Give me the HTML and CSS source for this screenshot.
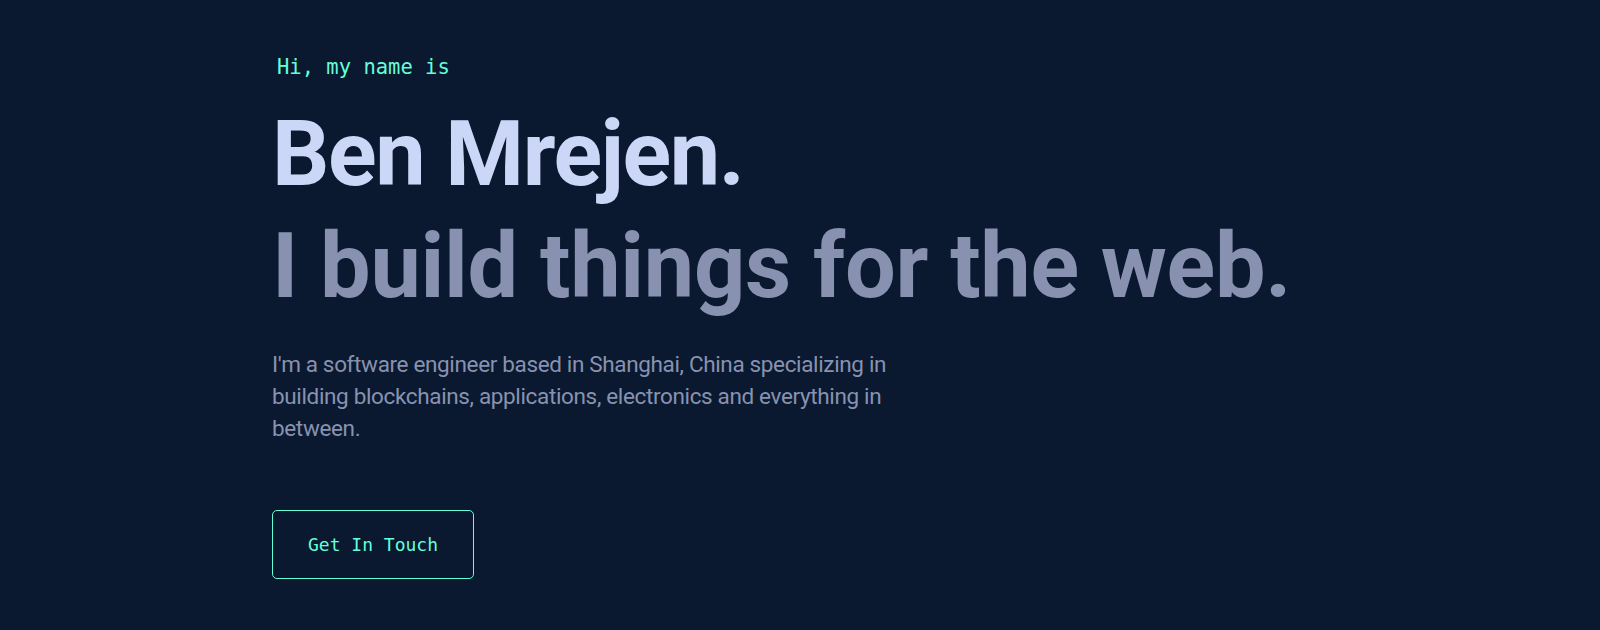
FILE: index.html
```html
<!DOCTYPE html>
<html lang="en">
<head>
<meta charset="utf-8">
<title>Ben Mrejen</title>
<link rel="stylesheet" href="styles.css">
</head>
<body>
<main class="hero">
  <h1 class="hero-intro">Hi, my name is</h1>
  <h2 class="big-heading name">Ben Mrejen.</h2>
  <h3 class="big-heading tagline">I build things for the web.</h3>
  <p class="hero-text">I'm a software engineer based in Shanghai, China specializing in building blockchains, applications, electronics and everything in between.</p>
  <a class="email-link" href="#contact">Get In Touch</a>
</main>
</body>
</html>
```

FILE: styles.css
```css
html, body {
  margin: 0;
  padding: 0;
}

body {
  background: #0a192f;
  height: 630px;
  overflow: hidden;
  font-family: "Roboto", "Liberation Sans", sans-serif;
}

.hero {
  max-width: 1056px;
  margin: 0 auto;
  padding-top: 56px;
  display: flex;
  flex-direction: column;
  align-items: flex-start;
}

.hero-intro {
  margin: 0 0 27px 5px;
  font-family: "DejaVu Sans Mono", "Liberation Mono", monospace;
  font-size: 20.5px;
  font-weight: 400;
  line-height: 22px;
  color: #64ffda;
}

.big-heading {
  margin: 0;
  font-size: 90px;
  font-weight: 700;
}

.name {
  line-height: 99px;
  letter-spacing: -1.4px;
  color: #ccd6f6;
}

.tagline {
  margin-top: 22px;
  line-height: 81px;
  letter-spacing: -0.3px;
  color: #8892b0;
}

.hero-text {
  margin: 41px 0 0;
  max-width: 675px;
  font-size: 22.5px;
  line-height: 32px;
  letter-spacing: -0.35px;
  color: #8892b0;
}

.email-link {
  margin-top: 66px;
  padding: 25px 35px;
  border: 1px solid #64ffda;
  border-radius: 5px;
  font-family: "DejaVu Sans Mono", "Liberation Mono", monospace;
  font-size: 18px;
  line-height: 17px;
  color: #64ffda;
  text-decoration: none;
}
```
